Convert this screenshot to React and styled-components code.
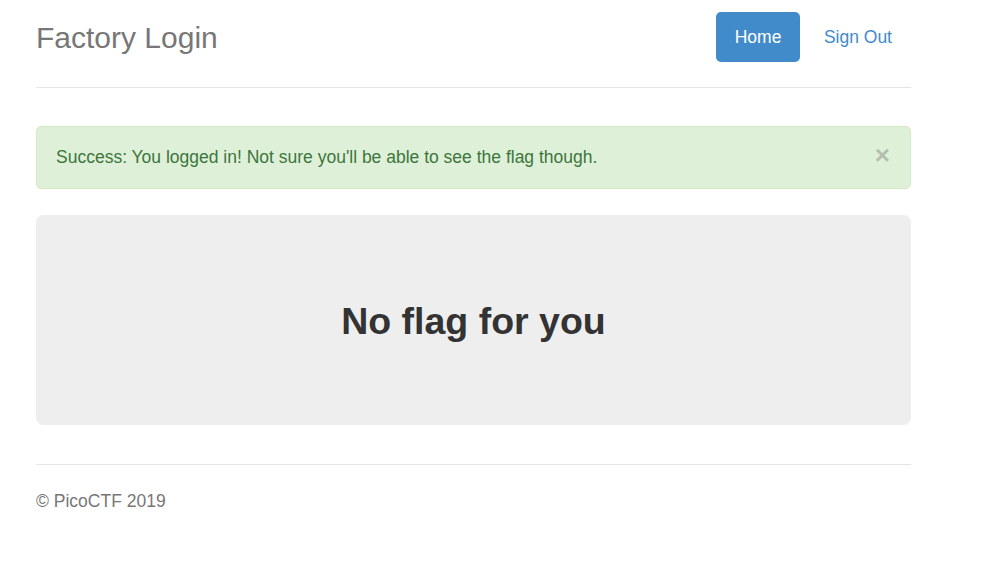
import React from "react";
import styled, { createGlobalStyle } from "styled-components";

const GlobalStyle = createGlobalStyle`
    body {
        margin: 0;
        background: #ffffff;
        font-family: "Liberation Sans", Arial, Helvetica, sans-serif;
        font-size: 17.5px;
        line-height: 25px;
        color: #333333;
    }
`

export default function App() {
    return (
        <>
            <GlobalStyle />
            <Container>
                <Header>
                    <Brand>Factory Login</Brand>
                    <Nav>
                        <NavLink href="#" active>Home</NavLink>
                        <NavLink href="#">Sign Out</NavLink>
                    </Nav>
                </Header>
                <Alert>
                    <span>Success: You logged in! Not sure you'll be able to see the flag though.</span>
                    <Close aria-label="Close">×</Close>
                </Alert>
                <Jumbotron>
                    <h1>No flag for you</h1>
                </Jumbotron>
                <Footer>© PicoCTF 2019</Footer>
            </Container>
        </>
    )
}

const Container = styled.div`
    width: 875px;
    margin-left: 36px;
    padding-top: 12px;
`
const Header = styled.header`
    display: flex;
    justify-content: space-between;
    align-items: center;
    height: 50px;
    padding-bottom: 25px;
    border-bottom: 1px solid #e5e5e5;
    margin-bottom: 38px;
`
const Brand = styled.h3`
    margin: 0;
    padding-top: 2px;
    font-size: 30px;
    line-height: 48px;
    font-weight: 400;
    color: #777777;
`
const Nav = styled.nav`
    display: flex;
    gap: 4.5px;
`
const NavLink = styled.a`
    display: block;
    padding: 13px 19px 12px;
    line-height: 25px;
    border-radius: 5px;
    text-decoration: none;
    color: ${props => props.active ? "#ffffff" : "#428bca"};
    background: ${props => props.active ? "#428bca" : "transparent"};
`
const Alert = styled.div`
    display: flex;
    justify-content: space-between;
    align-items: center;
    padding: 18px 20px 18px 19px;
    margin-bottom: 26px;
    background: #dff0d8;
    border: 1px solid #d6e9c6;
    border-radius: 5px;
    color: #3c763d;
`
const Close = styled.button`
    padding: 0;
    margin-top: -5px;
    border: 0;
    background: transparent;
    font-family: "Liberation Sans", Arial, sans-serif;
    font-size: 26px;
    font-weight: 700;
    line-height: 25px;
    color: #000000;
    opacity: 0.2;
    cursor: pointer;
`
const Jumbotron = styled.div`
    display: flex;
    justify-content: center;
    align-items: center;
    height: 210px;
    padding-top: 3px;
    box-sizing: border-box;
    margin-bottom: 39px;
    background: #eeeeee;
    border-radius: 7.5px;

    h1 {
        margin: 0;
        font-size: 37.5px;
        line-height: 1.1;
        font-weight: 700;
        color: #333333;
    }
`
const Footer = styled.footer`
    padding-top: 24px;
    border-top: 1px solid #e5e5e5;
    color: #777777;
`
